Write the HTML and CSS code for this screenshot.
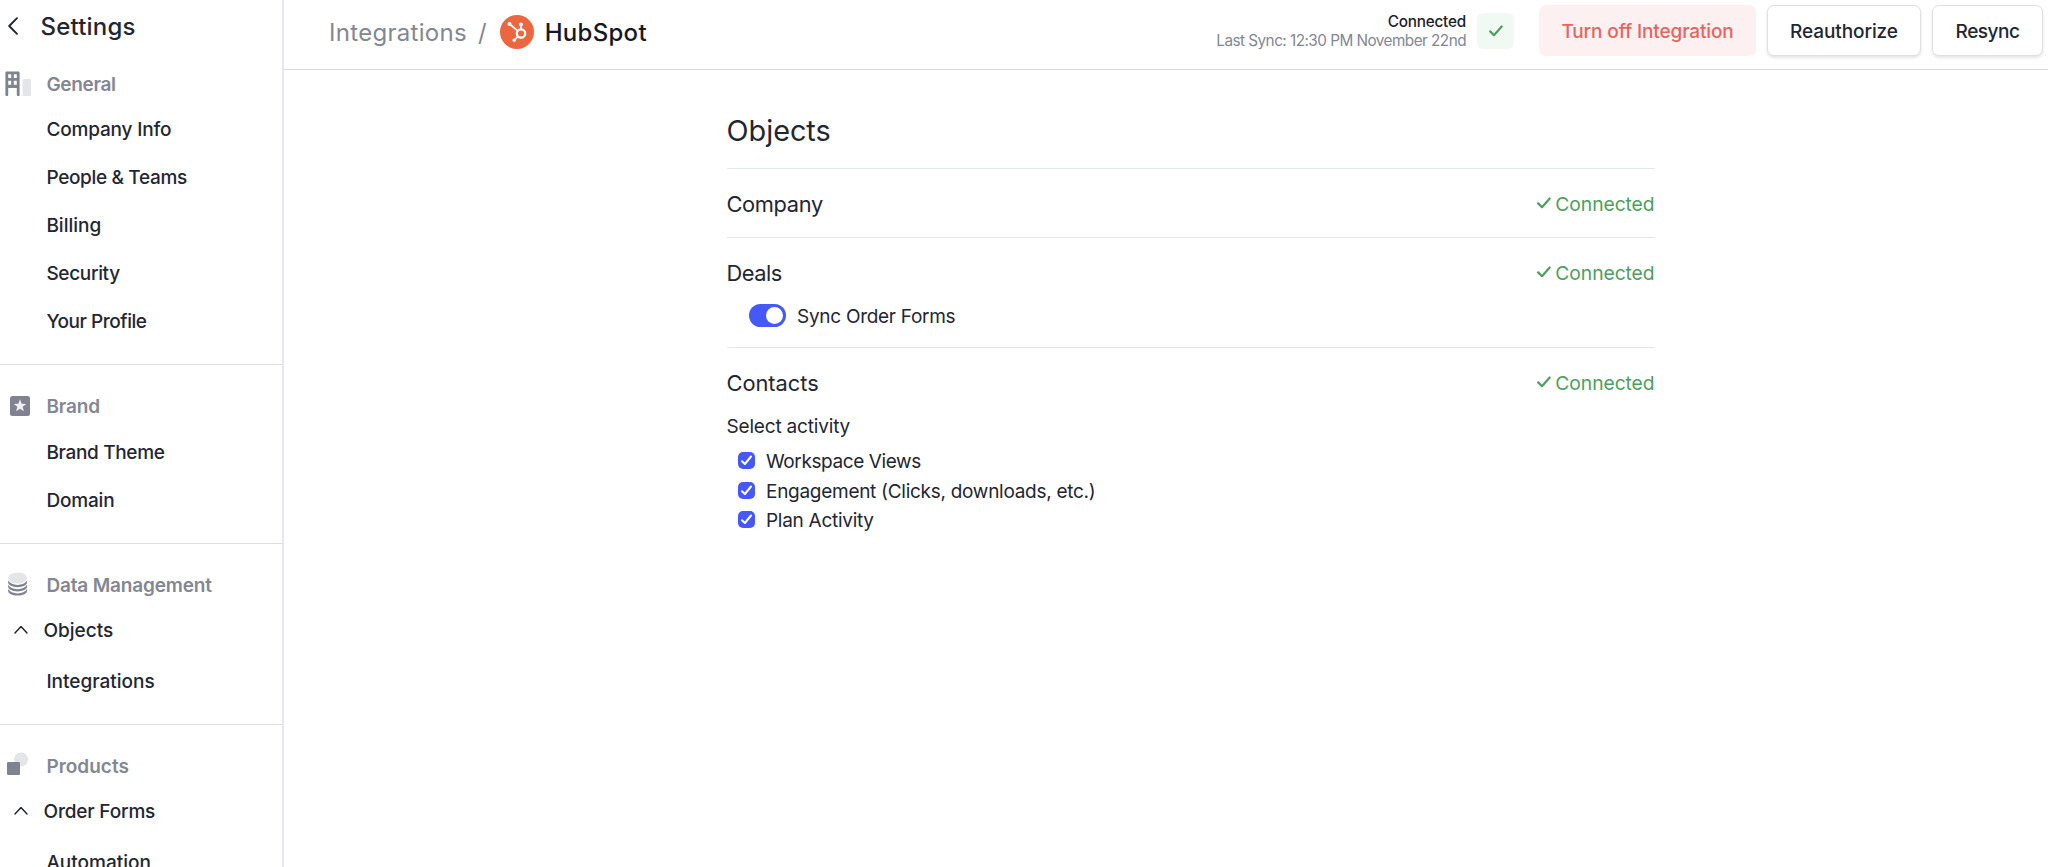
FILE: index.html
```html
<!DOCTYPE html>
<html lang="en">
<head>
    <meta charset="utf-8">
    <title>HubSpot - Integrations</title>
    <link rel="stylesheet" href="styles.css">
</head>
<body>
    <nav class="sidebar">
        <div class="sidebar-title">
            <svg class="back-icon" width="10" height="18" viewBox="0 0 10 18"><path d="M9 1.2 1.2 9 9 16.8"/></svg>
            <h1>Settings</h1>
        </div>

        <section class="nav-section general">
            <h2>
                <svg class="nav-icon" width="32" height="32" viewBox="0 0 32 32">
                    <path fill="#7f838f" fill-rule="evenodd" d="M6.6 3.6h11.8a1.2 1.2 0 0 1 1.2 1.2V27a1 1 0 0 1-1 1h-.8a1 1 0 0 1-1-1v-7H8.2v7a1 1 0 0 1-1 1h-.8a1 1 0 0 1-1-1V4.8a1.2 1.2 0 0 1 1.2-1.2zM8.2 6.2v3.8h3V6.2zm5.6 0v3.8h3V6.2zM8.2 12.7v4h3v-4zm5.6 0v4h3v-4z"/>
                    <rect x="22.6" y="11" width="8.4" height="17" rx="1.5" fill="#e4e5e8"/>
                </svg>
                <span class="tight-2">General</span>
            </h2>
            <a class="tight-1">Company Info</a>
            <a class="tight-2">People &amp; Teams</a>
            <a>Billing</a>
            <a class="tight-2">Security</a>
            <a class="tight-3">Your Profile</a>
        </section>

        <section class="nav-section">
            <h2>
                <svg class="nav-icon" width="32" height="32" viewBox="0 0 32 32">
                    <rect x="10" y="6" width="20" height="20" rx="2.5" fill="#7f838f"/>
                    <path fill="#eeeff1" d="M20 9.3l1.65 4.4 4.65.2-3.65 2.9 1.25 4.5-3.9-2.6-3.9 2.6 1.25-4.5-3.65-2.9 4.65-.2z"/>
                </svg>
                <span class="tight-1">Brand</span>
            </h2>
            <a class="tight-2">Brand Theme</a>
            <a class="tight-1">Domain</a>
        </section>

        <section class="nav-section">
            <h2>
                <svg class="nav-icon" width="32" height="32" viewBox="0 0 32 32">
                    <ellipse cx="17.6" cy="9" rx="9.5" ry="5.5" fill="#e4e5e8"/>
                    <g fill="#7f838f">
                        <path d="M8.1 11.6c1.6 2.8 5.2 4.4 9.5 4.4s7.9-1.6 9.5-4.4v1.7c0 2.7-4.2 4.9-9.5 4.9s-9.5-2.2-9.5-4.9z"/>
                        <path d="M8.1 15.8c1.6 2.8 5.2 4.4 9.5 4.4s7.9-1.6 9.5-4.4v1.7c0 2.7-4.2 4.9-9.5 4.9s-9.5-2.2-9.5-4.9z"/>
                        <path d="M8.1 20c1.6 2.8 5.2 4.4 9.5 4.4s7.9-1.6 9.5-4.4v1.7c0 2.7-4.2 4.9-9.5 4.9s-9.5-2.2-9.5-4.9z"/>
                    </g>
                </svg>
                <span class="tight-1">Data Management</span>
            </h2>
            <a class="parent"><svg class="caret" width="14" height="9" viewBox="0 0 14 9"><path d="M1 8l6-6.4L13 8"/></svg><span>Objects</span></a>
            <a>Integrations</a>
        </section>

        <section class="nav-section">
            <h2>
                <svg class="nav-icon" width="32" height="32" viewBox="0 0 32 32">
                    <circle cx="21" cy="9.5" r="7" fill="#e4e5e8"/>
                    <rect x="7" y="12" width="13" height="13" rx="1.2" fill="#7f838f"/>
                </svg>
                <span>Products</span>
            </h2>
            <a class="parent"><svg class="caret" width="14" height="9" viewBox="0 0 14 9"><path d="M1 8l6-6.4L13 8"/></svg><span class="tight-1">Order Forms</span></a>
            <a>Automation</a>
        </section>
    </nav>

    <div class="page">
        <header>
            <div class="breadcrumb">
                <a>Integrations</a>
                <span class="slash">/</span>
                <svg class="logo" width="34" height="34" viewBox="0 0 34 34">
                    <circle cx="17" cy="17" r="17" fill="#ec6640"/>
                    <g fill="none" stroke="#fff" stroke-width="1.7">
                        <circle cx="21" cy="18.5" r="4.2" stroke-width="2.3"/>
                        <path d="M21 14.5V10M17.8 15.8 9.5 9M18 21.5l-3.6 3.6"/>
                    </g>
                    <g fill="#fff">
                        <circle cx="9.5" cy="8.9" r="2"/>
                        <circle cx="21" cy="9.4" r="2"/>
                        <circle cx="14.2" cy="25.3" r="1.7"/>
                    </g>
                </svg>
                <strong>HubSpot</strong>
            </div>
            <div class="status">
                <div class="status-text">
                    <b>Connected</b>
                    <span>Last Sync: 12:30 PM November 22nd</span>
                </div>
                <div class="status-badge">
                    <svg class="check" width="14" height="12" viewBox="0 0 14 12"><path d="M1.2 6.4 5 10.2 12.7 1.5"/></svg>
                </div>
            </div>
            <div class="actions">
                <button class="danger">Turn off Integration</button>
                <button class="reauthorize">Reauthorize</button>
                <button class="resync">Resync</button>
            </div>
        </header>

        <main>
            <h2>Objects</h2>

            <section class="object">
                <div class="object-head">
                    <h3 class="tight-2">Company</h3>
                    <span class="connected"><svg class="check" width="14" height="12" viewBox="0 0 14 12"><path d="M1.2 6.4 5 10.2 12.7 1.5"/></svg>Connected</span>
                </div>
            </section>

            <section class="object">
                <div class="object-head">
                    <h3 class="tight-3">Deals</h3>
                    <span class="connected"><svg class="check" width="14" height="12" viewBox="0 0 14 12"><path d="M1.2 6.4 5 10.2 12.7 1.5"/></svg>Connected</span>
                </div>
                <label class="toggle-row">
                    <span class="toggle"></span>
                    Sync Order Forms
                </label>
            </section>

            <section class="object">
                <div class="object-head">
                    <h3>Contacts</h3>
                    <span class="connected"><svg class="check" width="14" height="12" viewBox="0 0 14 12"><path d="M1.2 6.4 5 10.2 12.7 1.5"/></svg>Connected</span>
                </div>
                <p>Select activity</p>
                <label class="option views">
                    <span class="box"><svg width="11" height="11" viewBox="0 0 11 11"><path d="M1 6.2 3.9 9 10 1.5"/></svg></span>
                    Workspace Views
                </label>
                <label class="option">
                    <span class="box"><svg width="11" height="11" viewBox="0 0 11 11"><path d="M1 6.2 3.9 9 10 1.5"/></svg></span>
                    Engagement (Clicks, downloads, etc.)
                </label>
                <label class="option">
                    <span class="box"><svg width="11" height="11" viewBox="0 0 11 11"><path d="M1 6.2 3.9 9 10 1.5"/></svg></span>
                    Plan Activity
                </label>
            </section>
        </main>
    </div>
</body>
</html>
```
FILE: styles.css
```css
* {
    box-sizing: border-box;
}

body {
    margin: 0;
    height: 100vh;
    display: flex;
    overflow: hidden;
    font-family: Inter, sans-serif;
    font-size: 19px;
    color: #222632;
    background: #fff;
}

h1, h2, h3, p {
    margin: 0;
    font-weight: 400;
}

svg {
    flex: none;
}

/* letter spacing steps */
.tight-1 { letter-spacing: -0.17px; }
.tight-2 { letter-spacing: -0.33px; }
.tight-3 { letter-spacing: -0.45px; }

/* Sidebar */
.sidebar {
    width: 284px;
    flex: none;
    overflow: hidden;
    border-right: 2px solid #e6e7ec;
}

.sidebar-title {
    display: flex;
    align-items: center;
    height: 51px;
    padding-left: 8px;
    gap: 22.5px;
}

.sidebar-title h1 {
    padding-top: 1px;
    font-size: 24px;
    font-weight: 500;
    letter-spacing: 0.2px;
}

.back-icon, .caret {
    fill: none;
    stroke: #1d212d;
    stroke-width: 1.8;
    stroke-linecap: round;
    stroke-linejoin: round;
}

.nav-section {
    padding: 20px 0 19.4px;
    border-bottom: 1px solid #dddee1;
}

.nav-section.general {
    padding-top: 12px;
}

.nav-section h2 {
    display: flex;
    align-items: center;
    height: 43px;
    gap: 14.4px;
    font-size: 19px;
    font-weight: 600;
    color: #838792;
}

.nav-icon {
    margin-top: -2px;
}

.nav-section a {
    display: flex;
    align-items: center;
    height: 47.8px;
    padding-left: 46.4px;
    font-weight: 500;
}

.nav-section .parent {
    padding-left: 14px;
    gap: 15.5px;
    margin: -1px 0 3px;
}

.caret {
    margin-top: -2px;
    stroke-width: 1.4;
}

/* Header */
.page {
    flex: 1;
}

header {
    display: flex;
    align-items: center;
    height: 70px;
    padding: 0 5px 8px 45px;
    border-bottom: 1px solid #dcdde0;
}

.breadcrumb {
    display: flex;
    align-items: center;
    padding-top: 2px;
    font-size: 24px;
    color: #838792;
}

.breadcrumb a, .breadcrumb strong, .slash {
    padding-top: 2px;
}

.breadcrumb a {
    letter-spacing: 0.3px;
}

.slash {
    margin: 0 13px 0 11px;
}

.breadcrumb strong {
    margin-left: 11px;
    font-weight: 500;
    letter-spacing: 0.3px;
    color: #151823;
}

.status {
    display: flex;
    align-items: center;
    gap: 11px;
    margin-left: auto;
}

.status-text {
    display: flex;
    flex-direction: column;
    align-items: flex-end;
    font-size: 15.3px;
    line-height: 19px;
    color: #838792;
}

.status-text b {
    font-weight: 500;
    letter-spacing: -0.2px;
    color: #1d212d;
}

.status-text span {
    letter-spacing: -0.53px;
}

.status-badge {
    display: flex;
    align-items: center;
    justify-content: center;
    width: 37px;
    height: 36px;
    border-radius: 6px;
    background: #f0faf3;
}

.check {
    fill: none;
    stroke: #4c9f60;
    stroke-width: 2.2;
    stroke-linecap: round;
    stroke-linejoin: round;
}

.actions {
    display: flex;
    gap: 11px;
    margin-left: 25px;
}

button {
    height: 51px;
    padding: 2px 0 0;
    border: 1px solid #dfe0e3;
    border-radius: 7px;
    background: #fff;
    box-shadow: 0 2px 3px rgba(0, 0, 0, 0.1);
    font-family: inherit;
    font-size: 19px;
    font-weight: 500;
    color: #222632;
}

.danger {
    width: 217px;
    border: none;
    background: #fdf0f0;
    box-shadow: none;
    letter-spacing: -0.13px;
    color: #e56561;
}

.reauthorize {
    width: 154px;
    letter-spacing: -0.1px;
}

.resync {
    width: 111px;
    letter-spacing: -0.5px;
}

/* Objects */
main {
    width: 928px;
    margin: 0 0 0 442.5px;
    padding-top: 40px;
}

main h2 {
    height: 58px;
    font-size: 28.8px;
    line-height: 41px;
}

.object {
    padding: 19px 0 17px;
    border-top: 1px solid #e1e7ee;
}

.object-head {
    display: flex;
    justify-content: space-between;
    align-items: center;
    height: 32px;
}

.object-head h3 {
    font-size: 21.8px;
}

.connected {
    display: flex;
    align-items: center;
    gap: 4px;
    font-size: 19.3px;
    letter-spacing: -0.08px;
    color: #4c9f60;
}

.connected .check {
    margin-bottom: 2px;
}

.toggle-row {
    display: flex;
    align-items: center;
    height: 28px;
    margin: 13px 0 0 22px;
    gap: 11.5px;
    letter-spacing: -0.28px;
}

.toggle {
    width: 37px;
    height: 23px;
    margin-top: -1px;
    padding: 3px;
    border-radius: 12px;
    background: #4558f9;
}

.toggle::after {
    content: '';
    display: block;
    width: 17px;
    height: 17px;
    margin-left: auto;
    border-radius: 50%;
    background: #fff;
}

.object p {
    height: 30px;
    margin: 13px 0 5px;
    line-height: 29px;
    letter-spacing: -0.18px;
}

.option {
    display: flex;
    align-items: center;
    height: 29.6px;
    padding-left: 11px;
    gap: 11.5px;
    letter-spacing: -0.28px;
}

.views {
    letter-spacing: -0.4px;
}

.box {
    display: flex;
    align-items: center;
    justify-content: center;
    width: 17px;
    height: 17px;
    margin-top: -2px;
    border-radius: 5px;
    background: #4558f9;
}

.box path {
    fill: none;
    stroke: #fff;
    stroke-width: 2;
    stroke-linecap: round;
    stroke-linejoin: round;
}
```
